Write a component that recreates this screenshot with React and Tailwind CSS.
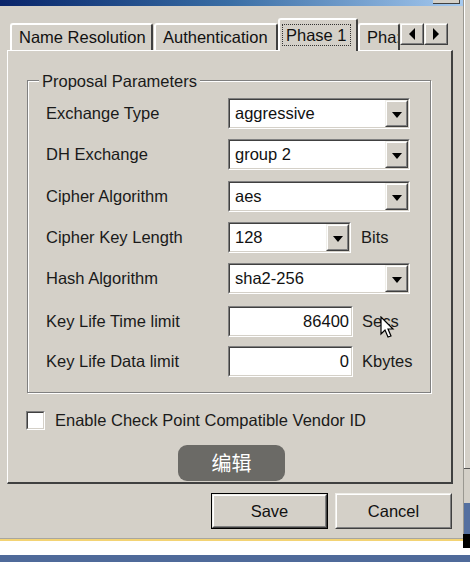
import React from 'react';

const font = { fontFamily: '"Liberation Sans", Arial, sans-serif' };

function Sunken({ className = '', children }) {
  return (
    <div className={`border border-t-[#808080] border-l-[#808080] border-b-white border-r-white ${className}`}>
      <div className="h-full border border-t-[#404040] border-l-[#404040] border-b-[#d4d0c8] border-r-[#d4d0c8] bg-white flex items-center">
        {children}
      </div>
    </div>
  );
}

function Raised({ className = '', children }) {
  return (
    <div className={`border border-t-[#f0efea] border-l-[#f0efea] border-b-[#404040] border-r-[#404040] bg-[#d4d0c8] ${className}`}>
      <div className="h-full border border-t-white border-l-white border-b-[#808080] border-r-[#808080] flex items-center justify-center">
        {children}
      </div>
    </div>
  );
}

function Arrow({ dir = 'down' }) {
  if (dir === 'left') return <div className="w-0 h-0 border-y-[6px] border-y-transparent border-r-[6px] border-r-black" />;
  if (dir === 'right') return <div className="w-0 h-0 border-y-[6px] border-y-transparent border-l-[6px] border-l-black" />;
  return <div className="w-0 h-0 border-x-[5px] border-x-transparent border-t-[6px] border-t-black mt-[2px]" />;
}

function Select({ value, width = 'w-[182px]' }) {
  return (
    <Sunken className={`${width} h-[31px]`}>
      <span className="flex-1 pl-[5px] text-[16.5px] text-[#111]">{value}</span>
      <Raised className="w-[23px] h-full">
        <Arrow />
      </Raised>
    </Sunken>
  );
}

function Row({ label, className = '', children }) {
  return (
    <div className={`flex items-center h-[31px] ${className}`}>
      <span className="w-[182px] text-[16.5px] text-[#1a1a1a]">{label}</span>
      {children}
    </div>
  );
}

function Tab({ label, active, className = '' }) {
  if (active) {
    return (
      <div className={`h-[33px] -mb-[1px] relative z-10 bg-[#d4d0c8] border-t-2 border-l-2 border-t-white border-l-white border-r-2 border-r-[#404040] rounded-t-[3px] flex items-start pt-[4px] px-[2px] whitespace-nowrap ${className}`}>
        <span className="border border-dotted border-[#333] px-[3px] leading-[20px] text-[16.5px] text-[#111]">{label}</span>
      </div>
    );
  }
  return (
    <div className={`h-[27px] border-t-2 border-l-2 border-t-white border-l-white border-r-2 border-r-[#404040] rounded-t-[3px] flex items-center px-[7px] text-[16.5px] text-[#111] overflow-hidden whitespace-nowrap ${className}`}>
      {label}
    </div>
  );
}

export default function App() {
  return (
    <div className="w-[470px] h-[562px] bg-[#d4d0c8] overflow-hidden flex flex-col" style={font}>
      <div className="flex flex-1 min-h-0">
        {/* dialog */}
        <div className="w-[463px] flex flex-col">
          <div className="h-[6px] bg-gradient-to-r from-[#0a246a] via-[#3a6ea5] to-[#a6caf0] flex justify-end">
            <div className="w-[27px] h-[4px] bg-[#d4d0c8] border-b border-r border-[#404040] mr-[3px]" />
          </div>

          {/* tabs */}
          <div className="flex items-end h-[44px] pl-[10px] pr-[10px] relative">
            <Tab label="Name Resolution" className="w-[143px]" />
            <Tab label="Authentication" className="w-[124px] ml-[1px]" />
            <Tab label="Phase 1" active className="w-[80px]" />
            <Tab label="Pha:" className="w-[42px] pr-0" />
            <div className="flex self-start mt-[17px] ml-0">
              <Raised className="w-[24px] h-[22px]"><Arrow dir="left" /></Raised>
              <Raised className="w-[24px] h-[22px]"><Arrow dir="right" /></Raised>
            </div>
          </div>

          {/* panel */}
          <div className="ml-[7px] w-[446px] h-[434px] border-t border-l border-t-white border-l-white border-b-2 border-r-2 border-b-[#404040] border-r-[#404040] pt-[29px] px-[19px]">
            <div className="relative w-[404px] h-[313px] border border-[#808080] shadow-[inset_1px_1px_0_white,1px_1px_0_white] pt-[17px] pl-[18px] flex flex-col gap-[10px]">
              <span className="absolute -top-[10px] left-[11px] px-[3px] bg-[#d4d0c8] text-[16.5px] leading-[20px] text-[#1a1a1a]">Proposal Parameters</span>
              <Row label="Exchange Type"><Select value="aggressive" /></Row>
              <Row label="DH Exchange"><Select value="group 2" /></Row>
              <Row label="Cipher Algorithm" className="mt-[1px]"><Select value="aes" /></Row>
              <Row label="Cipher Key Length">
                <Select value="128" width="w-[123px]" />
                <span className="ml-[10px] text-[16.5px] text-[#1a1a1a]">Bits</span>
              </Row>
              <Row label="Hash Algorithm"><Select value="sha2-256" /></Row>
              <Row label="Key Life Time limit" className="mt-[2px]">
                <Sunken className="w-[125px] h-[31px]">
                  <span className="flex-1 text-right pr-[2px] text-[16.5px] text-[#111]">86400</span>
                </Sunken>
                <span className="ml-[9px] text-[16.5px] text-[#1a1a1a] relative">
                  Secs
                  <svg className="absolute left-[18px] top-[7px]" width="16" height="24" viewBox="0 0 16 24">
                    <path d="M1 1 L1 18 L5 14 L8 21 L11 20 L8 13 L13 13 Z" fill="white" stroke="black" strokeWidth="1.2" strokeLinejoin="miter" />
                  </svg>
                </span>
              </Row>
              <Row label="Key Life Data limit" className="-mt-[1px]">
                <Sunken className="w-[125px] h-[31px]">
                  <span className="flex-1 text-right pr-[2px] text-[16.5px] text-[#111]">0</span>
                </Sunken>
                <span className="ml-[9px] text-[16.5px] text-[#1a1a1a]">Kbytes</span>
              </Row>
            </div>

            <div className="flex items-center mt-[15px] -ml-[1px]">
              <Sunken className="w-[19px] h-[19px]" />
              <span className="ml-[10px] text-[16.5px] text-[#1a1a1a]">Enable Check Point Compatible Vendor ID</span>
            </div>

            <div className="flex mt-[12px] ml-[151px]">
              <div className="w-[107px] h-[36px] rounded-[9px] bg-[#6b6a66] flex items-center justify-center text-white text-[20px]" style={{ fontFamily: '"Noto Sans CJK SC", sans-serif' }}>
                编辑
              </div>
            </div>
          </div>

          {/* buttons */}
          <div className="flex gap-[7px] mt-[9px] ml-[211px]">
            <div className="border border-black">
              <Raised className="w-[115px] h-[34px]">
                <span className="text-[16.5px] text-[#111]">Save</span>
              </Raised>
            </div>
            <Raised className="w-[117px] h-[36px]">
              <span className="text-[16.5px] text-[#111]">Cancel</span>
            </Raised>
          </div>
        </div>

        {/* right strip */}
        <div className="flex-1 border-l border-[#9a9891] flex flex-col">
          <div className="h-[468px] border-l border-white" />
          <div className="h-[1px] bg-[#555]" />
          <div className="h-[34px] bg-[#d4d0c8]" />
          <div className="flex-1 bg-[#5570a0]" />
        </div>
      </div>

      {/* bottom */}
      <div className="h-[1px] bg-[#a8a69f]" />
      <div className="h-[2px] bg-[#f3d374]" />
      <div className="h-[14px] bg-white relative">
        <div className="absolute right-0 -top-[7px] w-[7px] h-[14px] bg-black" />
      </div>
      <div className="h-[7px] bg-[#4f6a9a]" />
    </div>
  );
}
